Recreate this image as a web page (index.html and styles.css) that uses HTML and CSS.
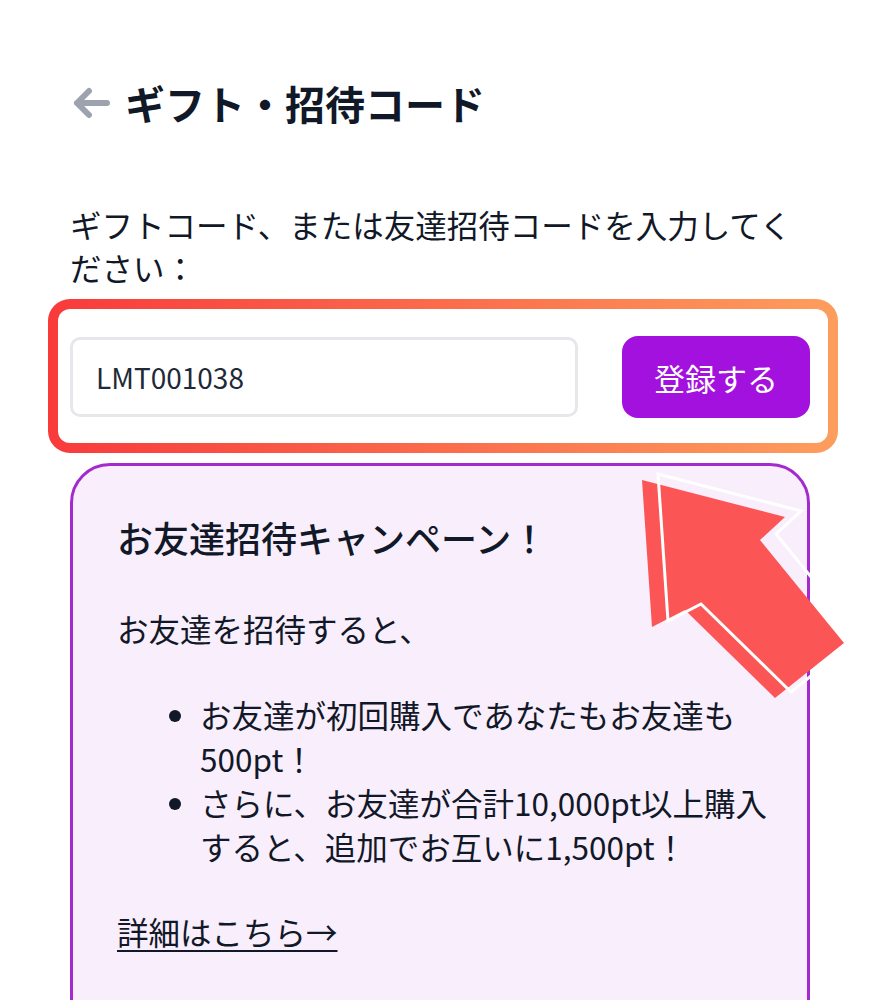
FILE: index.html
```html
<!DOCTYPE html>
<html lang="ja">
<head>
<meta charset="UTF-8">
<meta name="viewport" content="width=device-width, initial-scale=1.0">
<title>ギフト・招待コード</title>
<link rel="stylesheet" href="styles.css">
</head>
<body>
  <div class="page">
    <div class="header">
      <svg class="back" width="38" height="32" viewBox="0 0 38 32">
        <path d="M35 16 H5 M17 4 L5 16 L17 28" fill="none" stroke="#9ca3af" stroke-width="6" stroke-linecap="round" stroke-linejoin="round"/>
      </svg>
      <h1 class="title">ギフト・招待コード</h1>
    </div>

    <p class="label">ギフトコード、または友達招待コードを入力してください：</p>

    <div class="code-box">
      <input class="code-input" type="text" value="LMT001038">
      <button class="code-btn">登録する</button>
    </div>

    <div class="campaign">
      <h2 class="campaign-title">お友達招待キャンペーン！</h2>
      <p class="campaign-text">お友達を招待すると、</p>
      <ul class="campaign-list">
        <li>お友達が初回購入であなたもお友達も500pt！</li>
        <li>さらに、お友達が合計10,000pt以上購入すると、追加でお互いに1,500pt！</li>
      </ul>
      <a class="campaign-link" href="#">詳細はこちら→</a>
    </div>

    <!-- annotation arrow -->
    <svg class="pointer" width="240" height="250" viewBox="0 0 240 250">
      <polygon points="12,15 155,52 130,75 214,178 145,233 55,145 22,162" fill="#fc5555"/>
      <polygon points="28,9 171,46 146,69 230,172 161,227 71,139 38,156" fill="none" stroke="#ffffff" stroke-width="3" stroke-linejoin="miter"/>
    </svg>
  </div>
</body>
</html>
```

FILE: styles.css
```css
body {
  margin: 0;
  padding: 0;
  background: #ffffff;
  color: #111827;
  font-family: "Noto Sans CJK JP", "Noto Sans", sans-serif;
}

.page {
  position: relative;
  padding: 75px 70px 0;
  overflow: hidden;
  height: 925px;
}

.header {
  display: flex;
  align-items: center;
  gap: 15px;
  height: 56px;
}

.back {
  margin-left: 2px;
  flex-shrink: 0;
}

.title {
  margin: 0;
  font-size: 40px;
  line-height: 56px;
  font-weight: 700;
}

.label {
  margin: 72px 0 0;
  font-size: 31.5px;
  line-height: 43px;
}

.code-box {
  margin: 10px -28px 0 -22px;
  padding: 27px 18px 25px 12px;
  border: 10px solid transparent;
  border-radius: 22px;
  background: linear-gradient(#ffffff, #ffffff) padding-box,
              linear-gradient(90deg, #f83a3b, #fd9e5d) border-box;
  display: flex;
  align-items: center;
  gap: 44px;
}

.code-input {
  flex: 1;
  min-width: 0;
  height: 80px;
  box-sizing: border-box;
  border: 3px solid #e5e7eb;
  border-radius: 10px;
  padding: 0 0 0 23px;
  font-family: "Noto Sans CJK JP", sans-serif;
  font-size: 28px;
  color: #1f2937;
  outline: none;
}

.code-btn {
  width: 188px;
  height: 82px;
  border: none;
  border-radius: 16px;
  background: #a311de;
  color: #ffffff;
  font-family: "Noto Sans CJK JP", sans-serif;
  font-size: 31px;
  cursor: pointer;
}

.campaign {
  margin-top: 10px;
  border: 3px solid #a42ad0;
  border-radius: 40px;
  background: #f9eefc;
  padding: 49px 44px 120px;
}

.campaign-title {
  margin: 0;
  font-size: 36px;
  line-height: 45px;
  font-weight: 500;
}

.campaign-text {
  margin: 46px 0 0;
  font-size: 31.5px;
  line-height: 44px;
}

.campaign-list {
  margin: 42px -10px 0 0;
  padding-left: 83px;
  font-size: 31.5px;
  line-height: 44px;
}

.campaign-link {
  display: inline-block;
  margin-top: 41px;
  font-size: 31.5px;
  line-height: 44px;
  color: #111827;
  text-decoration: underline;
  text-decoration-thickness: 2px;
  text-underline-offset: 5px;
}

.pointer {
  position: absolute;
  left: 630px;
  top: 465px;
}
```
